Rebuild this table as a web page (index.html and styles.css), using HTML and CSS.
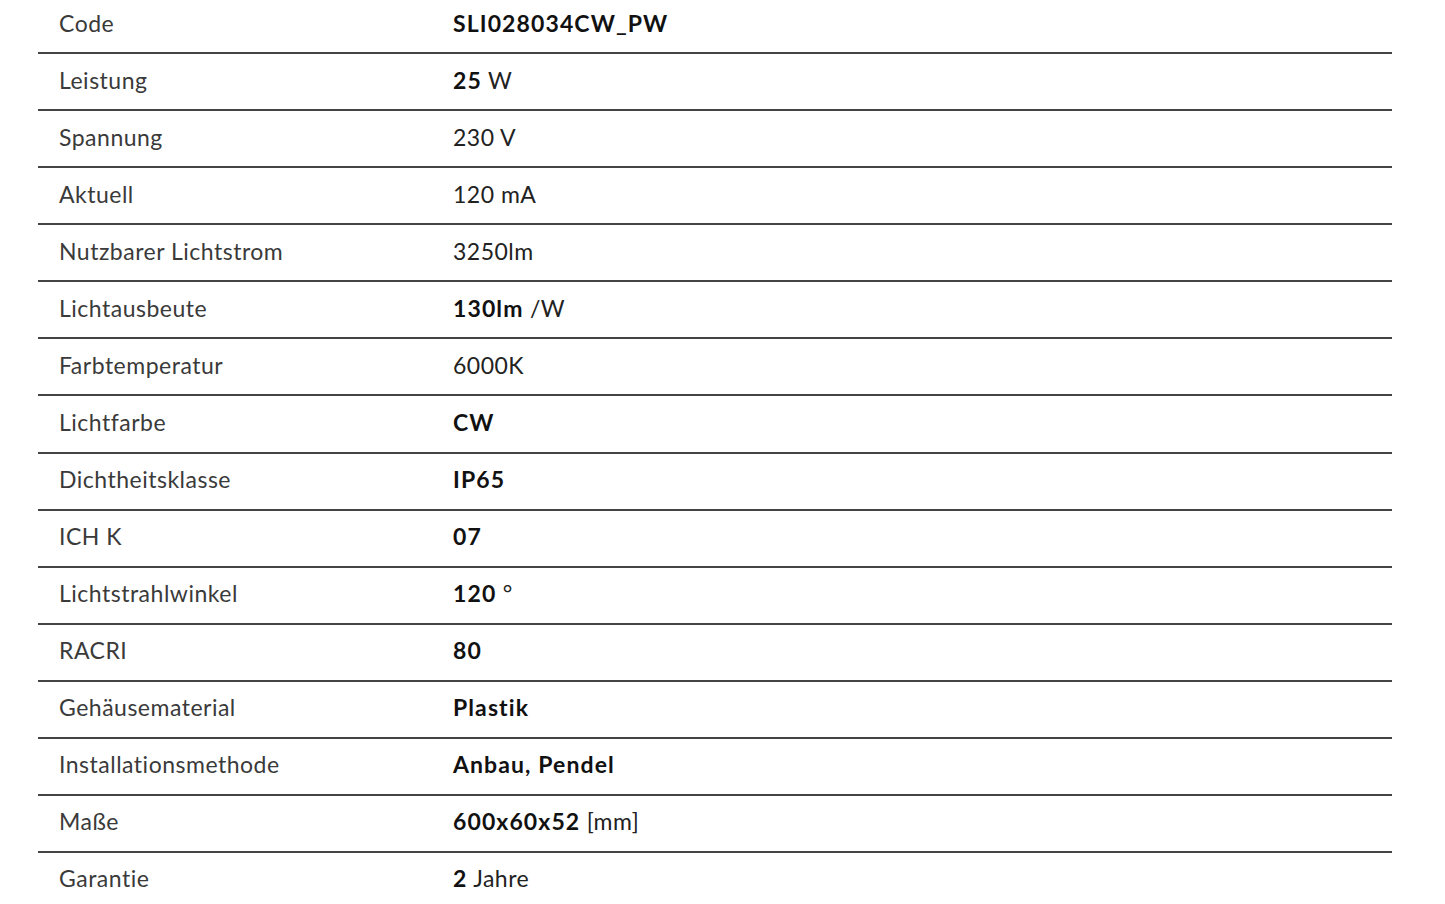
FILE: index.html
```html
<!DOCTYPE html>
<html lang="de">
<head>
<meta charset="utf-8">
<title>Technische Daten</title>
<link rel="stylesheet" href="styles.css">
</head>
<body>
<div class="specs">
  <div class="row"><div class="label">Code</div><div class="value"><b>SLI028034CW_PW</b></div></div>
  <div class="row"><div class="label">Leistung</div><div class="value"><b>25</b> W</div></div>
  <div class="row"><div class="label">Spannung</div><div class="value">230 V</div></div>
  <div class="row"><div class="label">Aktuell</div><div class="value">120 mA</div></div>
  <div class="row"><div class="label">Nutzbarer Lichtstrom</div><div class="value">3250lm</div></div>
  <div class="row"><div class="label">Lichtausbeute</div><div class="value"><b>130lm</b> /W</div></div>
  <div class="row"><div class="label">Farbtemperatur</div><div class="value">6000K</div></div>
  <div class="row"><div class="label">Lichtfarbe</div><div class="value"><b>CW</b></div></div>
  <div class="row"><div class="label">Dichtheitsklasse</div><div class="value"><b>IP65</b></div></div>
  <div class="row"><div class="label">ICH K</div><div class="value"><b>07</b></div></div>
  <div class="row"><div class="label">Lichtstrahlwinkel</div><div class="value"><b>120</b> °</div></div>
  <div class="row"><div class="label">RACRI</div><div class="value"><b>80</b></div></div>
  <div class="row"><div class="label">Gehäusematerial</div><div class="value"><b>Plastik</b></div></div>
  <div class="row"><div class="label">Installationsmethode</div><div class="value"><b>Anbau, Pendel</b></div></div>
  <div class="row"><div class="label">Maße</div><div class="value"><b>600x60x52</b> [mm]</div></div>
  <div class="row"><div class="label">Garantie</div><div class="value"><b>2</b> Jahre</div></div>
</div>
</body>
</html>
```
FILE: styles.css
```css
html, body {
  margin: 0;
  padding: 0;
  background: #fff;
}
body {
  font-family: "Lato", "Noto Sans", sans-serif;
  font-size: 23px;
  letter-spacing: 0.5px;
  color: #333;
}
.specs {
  width: 1354px;
  margin: -3px 0 0 38px;
}
.row {
  display: grid;
  grid-template-columns: 415px 1fr;
  align-items: center;
  height: 51.07px;
  padding-bottom: 4px;
  border-bottom: 2px solid #444;
}
.label {
  padding-left: 21px;
  color: #3a3a3a;
}
.value {
  color: #222;
}
.value b {
  font-weight: 700;
  letter-spacing: 1.1px;
  color: #111;
}
```
